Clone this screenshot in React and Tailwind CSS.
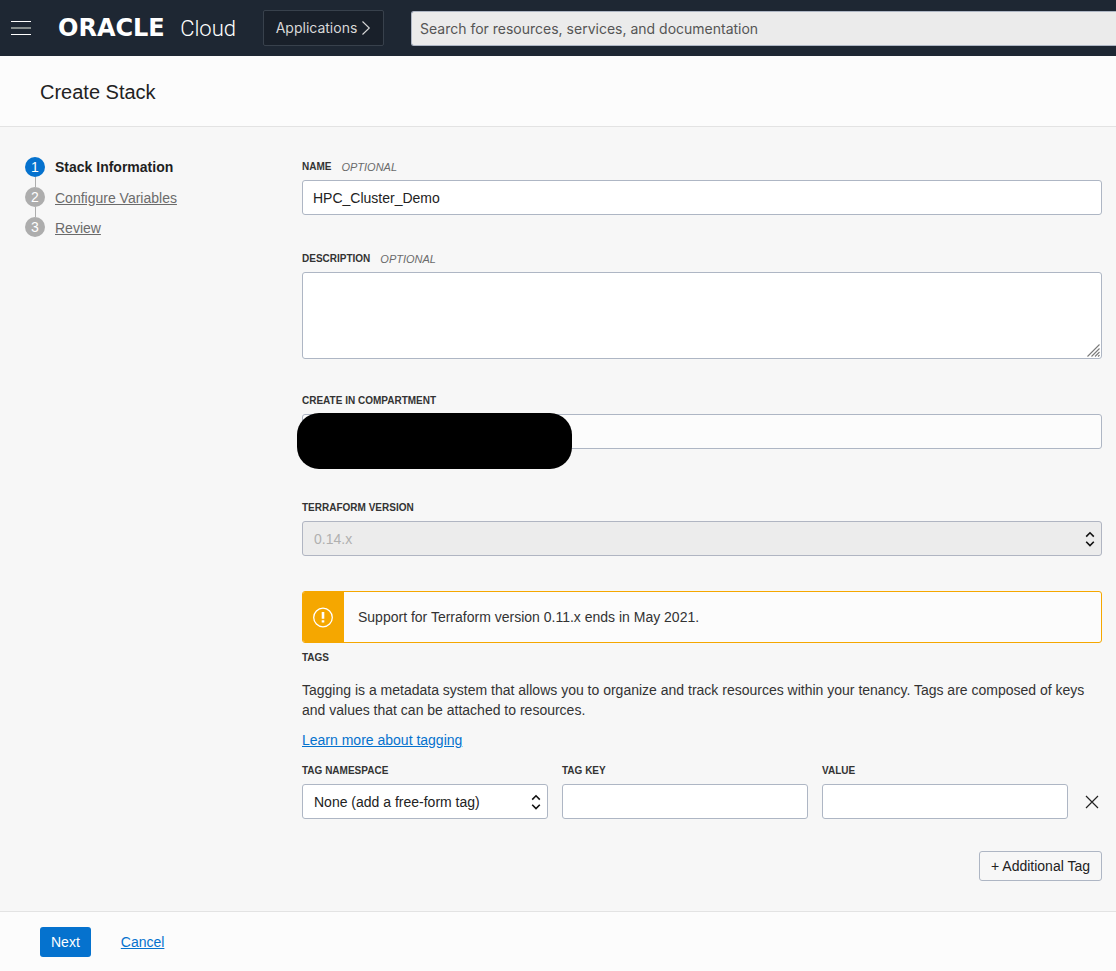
import React from "react";

const fieldClass =
  "block h-[35px] w-full rounded-[3px] border border-[#aeb6c4] bg-white px-2.5 text-sm text-[#222222] outline-none focus:border-[#0572ce]";

function Label({ htmlFor, optional, children }) {
  return (
    <label
      htmlFor={htmlFor}
      className="mb-[5px] flex items-center gap-2.5 text-[11px] leading-4 text-[#333333]"
    >
      <span className="text-[10px] font-bold">{children}</span>
      {optional && <em className="text-[#6b6b6b]">OPTIONAL</em>}
    </label>
  );
}

function SelectArrows() {
  return (
    <svg
      className="pointer-events-none absolute top-1/2 right-[7px] -translate-y-1/2"
      width="10"
      height="16"
      viewBox="0 0 10 16"
      fill="none"
      stroke="#111111"
      strokeWidth="1.6"
      aria-hidden="true"
    >
      <path d="M1.2 5.6 5 1.8l3.8 3.8M1.2 10.8 5 14.6l3.8-3.8" />
    </svg>
  );
}

function SelectField({ id, disabled, options }) {
  return (
    <div className="relative">
      <select
        id={id}
        disabled={disabled}
        className={
          disabled
            ? "block h-[35px] w-full appearance-none rounded-[3px] border border-[#b0b5c2] bg-[#ececec] px-[11px] text-sm text-[#b0b0b0] opacity-100"
            : "block h-[35px] w-full appearance-none rounded-[3px] border border-[#aeb6c4] bg-white px-[11px] text-sm text-[#222222]"
        }
      >
        {options.map((o) => (
          <option key={o}>{o}</option>
        ))}
      </select>
      <SelectArrows />
    </div>
  );
}

function Header() {
  return (
    <header className="flex h-14 items-center overflow-hidden bg-[#1e2733] pl-[11px] font-['Inter',sans-serif]">
      <button type="button" aria-label="Menu" className="shrink-0">
        <svg width="20" height="16" viewBox="0 0 20 16" aria-hidden="true">
          <rect y="1" width="20" height="1" fill="#ffffff" />
          <rect y="7" width="20" height="2" fill="#858c8b" />
          <rect y="14" width="20" height="1" fill="#ffffff" />
        </svg>
      </button>
      <a
        href="#home"
        className="ml-[27px] flex w-[178px] shrink-0 items-baseline justify-between text-white"
      >
        <span className="font-['DejaVu_Sans',sans-serif] text-2xl leading-8 font-bold">
          ORACLE
        </span>
        <span className="font-['Roboto',sans-serif] text-[22px] leading-8 font-light">
          Cloud
        </span>
      </a>
      <button
        type="button"
        className="ml-[27px] flex h-9 w-[121px] shrink-0 items-center justify-center gap-1 rounded-xs border border-[#38414c] bg-[#19202a] text-sm text-[#d8d8d8]"
      >
        Applications
        <svg
          width="10"
          height="16"
          viewBox="0 0 10 16"
          fill="none"
          stroke="#d8d8d8"
          strokeWidth="1.1"
          aria-hidden="true"
        >
          <path d="M1.5 1.5 8.3 8 1.5 14.5" />
        </svg>
      </button>
      <input
        type="search"
        aria-label="Search"
        placeholder="Search for resources, services, and documentation"
        className="ml-[27px] h-[35px] min-w-0 flex-1 rounded-l-[3px] border border-r-0 border-[#aeb6c4] bg-[#ebebeb] px-2 text-sm placeholder:text-[#555555]"
      />
    </header>
  );
}

const steps = [
  { n: 1, title: "Stack Information", active: true },
  { n: 2, title: "Configure Variables" },
  { n: 3, title: "Review" },
];

function Steps() {
  return (
    <nav aria-label="Steps" className="w-[277px] shrink-0 pt-[30px]">
      <ol className="flex flex-col">
        {steps.map((s, i) => (
          <li key={s.n} className="flex gap-2.5">
            <div className="flex flex-col items-center">
              <span
                className={
                  s.active
                    ? "flex size-5 items-center justify-center rounded-full bg-[#0572ce] text-sm text-white"
                    : "flex size-5 items-center justify-center rounded-full bg-[#adadad] text-sm text-white"
                }
              >
                {s.n}
              </span>
              {i < steps.length - 1 && <span className="h-2.5 w-px bg-[#adadad]" />}
            </div>
            {s.active ? (
              <span className="text-sm leading-5 font-bold text-[#1f1f1f]">{s.title}</span>
            ) : (
              <a href="#step" className="text-sm leading-[22px] text-[#6b6b6b] underline">
                {s.title}
              </a>
            )}
          </li>
        ))}
      </ol>
    </nav>
  );
}

export default function App() {
  return (
    <div className="flex min-h-screen flex-col bg-[#f7f7f7] font-['Liberation_Sans',Arial,sans-serif] text-sm text-[#333333]">
      <Header />
      <div className="flex h-[71px] items-center border-b border-[#e3e3e3] bg-[#fcfcfc] px-10 pt-0.5">
        <h1 className="text-xl text-[#222222]">Create Stack</h1>
      </div>

      <div className="flex flex-1 pr-3.5 pl-[25px]">
        <Steps />
        <main className="min-w-0 flex-1 pt-8 pb-[30px]">
          <form>
            <Label htmlFor="name" optional>
              NAME
            </Label>
            <input id="name" defaultValue="HPC_Cluster_Demo" className={fieldClass} />

            <div className="mt-9">
              <Label htmlFor="description" optional>
                DESCRIPTION
              </Label>
              <div className="relative">
                <textarea
                  id="description"
                  className="block h-[87px] w-full resize-y rounded-[3px] border border-[#aeb6c4] bg-white px-2.5 py-2 text-sm [&::-webkit-resizer]:bg-transparent"
                />
                <svg
                  className="pointer-events-none absolute right-0.5 bottom-0.5"
                  width="13"
                  height="13"
                  viewBox="0 0 13 13"
                  stroke="#7a7a7a"
                  strokeWidth="1.1"
                  aria-hidden="true"
                >
                  <path d="M0.5 12.5l12-12M4.5 12.5l8-8M8 12.5 12.5 8M11 12.5l1.5-1.5" />
                </svg>
              </div>
            </div>

            <div className="mt-[34px]">
              <Label htmlFor="compartment">CREATE IN COMPARTMENT</Label>
              <div className="relative">
                <input
                  id="compartment"
                  readOnly
                  className="block h-[35px] w-full rounded-[3px] border border-[#aeb6c4] bg-[#fcfcfc] px-2.5 text-sm"
                />
                <div className="absolute -top-px -left-[5px] h-14 w-[275px] rounded-[22px] bg-black" />
              </div>
            </div>

            <div className="mt-[51px]">
              <Label htmlFor="version">TERRAFORM VERSION</Label>
              <SelectField id="version" disabled options={["0.14.x"]} />
            </div>

            <div
              role="status"
              className="mt-[35px] flex h-[52px] overflow-hidden rounded-[3px] border border-[#f5a700] bg-[#fcfcfc]"
            >
              <div className="flex w-[41px] shrink-0 items-center justify-center bg-[#f5a700]">
                <svg
                  width="21"
                  height="22"
                  viewBox="0 0 21 22"
                  fill="none"
                  stroke="#ffffff"
                  aria-hidden="true"
                >
                  <circle cx="10" cy="11.5" r="9.3" strokeWidth="1.3" />
                  <path d="M10 6v6.8M10 14.3v2.2" strokeWidth="2.6" />
                </svg>
              </div>
              <p className="flex items-center px-3.5">
                Support for Terraform version 0.11.x ends in May 2021.
              </p>
            </div>

            <h2 className="mt-[7px] text-[10px] leading-4 font-bold text-[#333333]">TAGS</h2>
            <p className="mt-3.5 leading-5">
              Tagging is a metadata system that allows you to organize and track resources within
              your tenancy. Tags are composed of keys and values that can be attached to resources.
            </p>
            <a href="#tagging" className="mt-2.5 block w-fit leading-5 text-[#0572ce] underline">
              Learn more about tagging
            </a>

            <div className="mt-[13px] flex items-end gap-3.5">
              <div className="min-w-0 flex-1">
                <Label htmlFor="namespace">TAG NAMESPACE</Label>
                <SelectField id="namespace" options={["None (add a free-form tag)"]} />
              </div>
              <div className="min-w-0 flex-1">
                <Label htmlFor="key">TAG KEY</Label>
                <input id="key" className={fieldClass} />
              </div>
              <div className="min-w-0 flex-1">
                <Label htmlFor="value">VALUE</Label>
                <input id="value" className={fieldClass} />
              </div>
              <button
                type="button"
                aria-label="Remove tag"
                className="flex h-[35px] w-5 items-center justify-center"
              >
                <svg
                  width="14"
                  height="14"
                  viewBox="0 0 14 14"
                  stroke="#222222"
                  strokeWidth="1.2"
                  aria-hidden="true"
                >
                  <path d="M1 1l12 12M13 1 1 13" />
                </svg>
              </button>
            </div>

            <div className="mt-8 flex justify-end">
              <button
                type="button"
                className="h-[30px] rounded-[3px] border border-[#aeb6c4] px-[11px] text-sm text-[#222222]"
              >
                + Additional Tag
              </button>
            </div>
          </form>
        </main>
      </div>

      <footer className="flex h-[60px] items-center gap-[30px] border-t border-[#e3e3e3] bg-[#fcfcfc] px-10">
        <button type="button" className="h-[30px] rounded-[3px] bg-[#0572ce] px-[11px] text-white">
          Next
        </button>
        <a href="#cancel" className="text-[#0572ce] underline">
          Cancel
        </a>
      </footer>
    </div>
  );
}
